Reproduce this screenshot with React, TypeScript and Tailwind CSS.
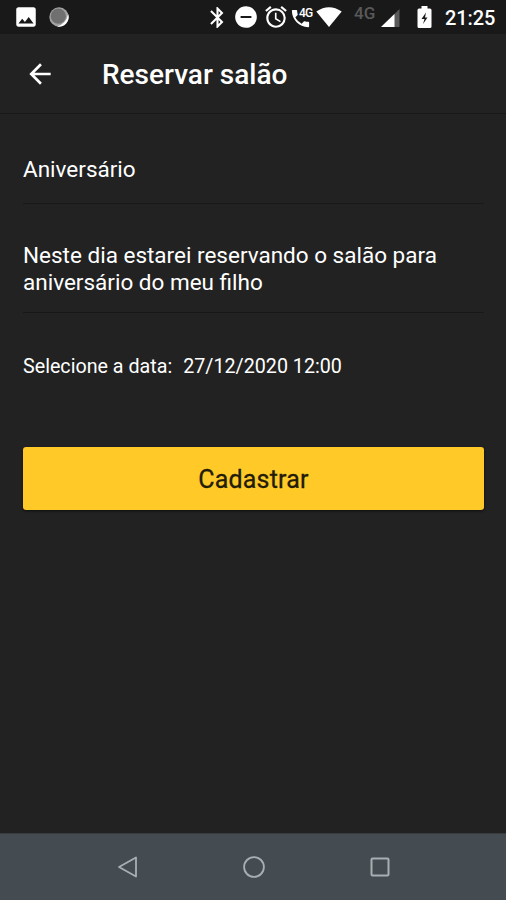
import type { ReactNode } from "react";
import {
  MdAlarm,
  MdArrowBack,
  MdBluetooth,
  MdDoNotDisturbOn,
  MdImage,
  MdPhone,
} from "react-icons/md";

const StatusBar = () => (
  <div className="flex h-[34px] shrink-0 items-center bg-[#191919] pl-[13px] pr-[11px] text-white">
    <MdImage className="h-[26px] w-[26px]" />
    <svg className="ml-[10px] h-5 w-5" viewBox="0 0 20 20">
      <circle cx="10" cy="10" r="9.7" fill="#a3a3a3" />
      <path d="M19.200 7A9.700 9.700 0 0 1 8 19.500Q17 17 19.200 7Z" fill="#fff" />
      <circle cx="9.3" cy="9.2" r="7.6" fill="#707070" />
    </svg>

    <div className="ml-auto flex items-center">
      <MdBluetooth className="h-[25px] w-[25px]" />
      <MdDoNotDisturbOn className="ml-[3px] h-[26px] w-[26px]" />
      <MdAlarm className="ml-[4px] h-[26px] w-[26px]" />
      <div className="relative ml-[1px] h-6 w-[24px]">
        <MdPhone className="absolute -left-[1px] top-[2px] h-[23px] w-[23px]" />
        <span className="absolute left-[9px] top-[3px] bg-[#191919] text-[12px] font-medium leading-[11px] tracking-[-0.7px]">
          4G
        </span>
      </div>
      <svg className="ml-[2px] h-5 w-[26px]" viewBox="0 0 26 20">
        <path d="M.3 4.6Q13-4 25.7 4.6L13 20Z" fill="currentColor" />
      </svg>
      <span className="ml-[12px] mb-[7px] w-[22px] text-[17px] font-medium leading-none text-[#595959]">
        4G
      </span>
      <svg className="ml-[5px] mt-[2px] h-[18px] w-[19px]" viewBox="0 0 19 18">
        <path d="M18.500 0V18H0Z" fill="#5a5a5a" />
        <path d="M13.500 4.900V18H0Z" fill="currentColor" />
      </svg>
      <svg className="ml-[17px] h-[22px] w-[15px]" viewBox="0 0 15 22">
        <path
          d="M4.5 0h6v2.5H13a1.5 1.5 0 0 1 1.5 1.5v16.5A1.5 1.5 0 0 1 13 22H2A1.5 1.5 0 0 1 .5 20.500V4A1.500 1.500 0 0 1 2 2.500h2.500Z"
          fill="currentColor"
        />
        <path d="M9 6.500 4.500 13h3L6 18l4.500-6.500H8Z" fill="#191919" />
      </svg>
      <span className="ml-[13px] mt-[2px] w-[50px] whitespace-nowrap text-[20px] font-medium leading-none tracking-[-0.1px]">
        21:25
      </span>
    </div>
  </div>
);

const Header = () => (
  <header className="flex h-[80px] shrink-0 items-center border-b border-[#191919] pl-[24px]">
    <button aria-label="Voltar">
      <MdArrowBack className="h-8 w-8" />
    </button>
    <h1 className="ml-[46px] mt-[3px] text-[28px] font-medium leading-none">
      Reservar salão
    </h1>
  </header>
);

const Field = ({ children }: { children: ReactNode }) => (
  <div className="border-b border-[#181818] text-[22.5px] leading-[27px]">
    {children}
  </div>
);

const NavBar = () => (
  <nav className="flex h-[67px] shrink-0 items-center justify-center gap-[104px] border-t border-[#383c3f] bg-[#454c51] pl-px">
    <svg className="h-[22px] w-[22px]" viewBox="0 0 22 22" fill="none" stroke="#a8afb2" strokeWidth="1.8">
      <path d="M19 1.500V20.500L2 11Z" strokeLinejoin="round" />
    </svg>
    <svg className="h-[22px] w-[22px]" viewBox="0 0 22 22" fill="none" stroke="#a8afb2" strokeWidth="1.8">
      <circle cx="11" cy="11" r="9.900" />
    </svg>
    <svg className="h-[22px] w-[22px]" viewBox="0 0 22 22" fill="none" stroke="#a8afb2" strokeWidth="2">
      <rect x="2.500" y="2.500" width="17" height="17" rx="1" />
    </svg>
  </nav>
);

const App = () => {
  return (
    <div className="flex h-[900px] w-[506px] flex-col bg-[#222222] font-['Roboto',sans-serif] text-white">
      <StatusBar />
      <Header />

      <main className="flex flex-1 flex-col pl-[23px] pr-[22px] pt-[42px]">
        <Field>
          <p className="pb-[20px]">Aniversário</p>
        </Field>
        <Field>
          <p className="pb-[16px] pt-[38px]">
            Neste dia estarei reservando o salão para aniversário do meu filho
          </p>
        </Field>

        <div className="mt-[42px] flex gap-[11px] text-[19.7px] leading-6">
          <span>Selecione a data:</span>
          <span>27/12/2020 12:00</span>
        </div>

        <button className="mt-[68px] h-[63px] rounded-[3px] bg-[#ffca28] pt-[2px] text-[25px] tracking-[0.2px] text-[#221c08] shadow-[0_1px_3px_rgba(0,0,0,0.6)] [-webkit-text-stroke:0.3px_#221c08]">
          Cadastrar
        </button>
      </main>

      <NavBar />
    </div>
  );
};

export default App;
